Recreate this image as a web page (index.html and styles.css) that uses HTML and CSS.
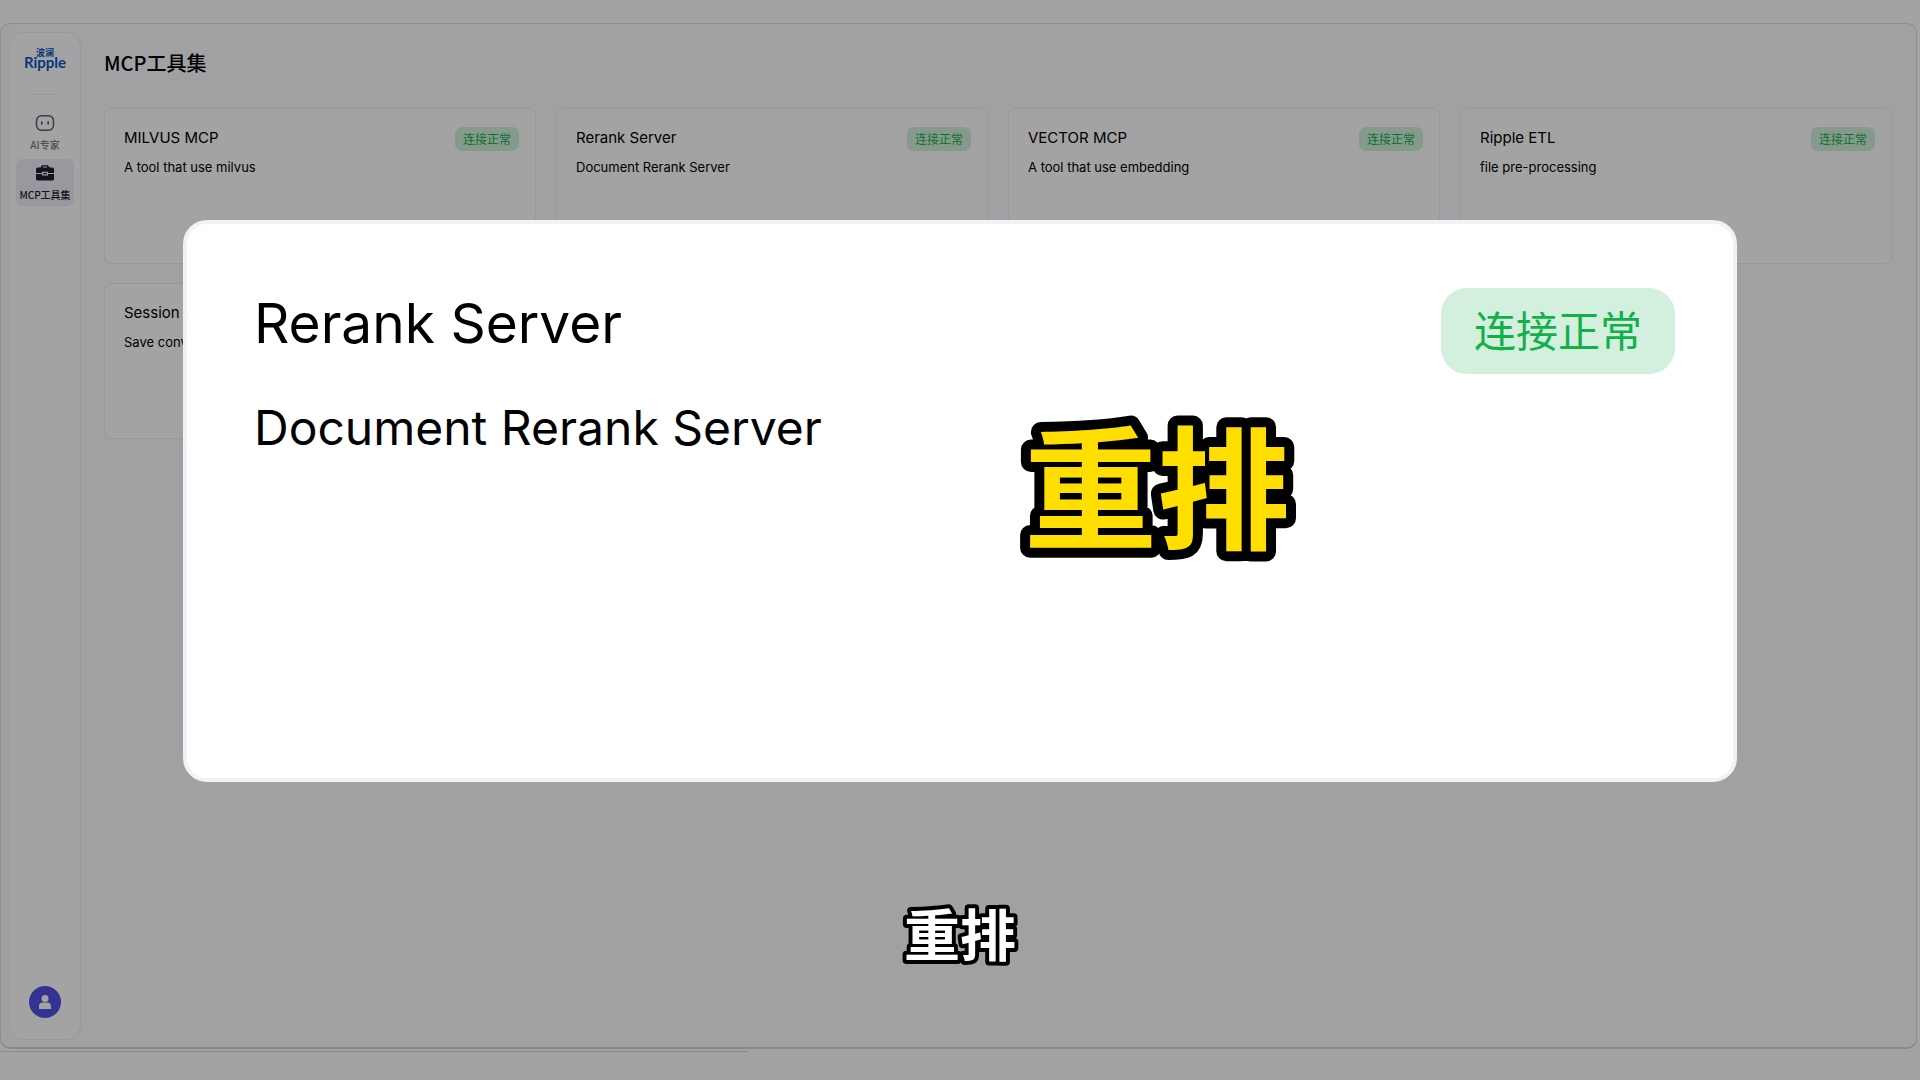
FILE: index.html
```html
<!DOCTYPE html>
<html lang="zh-CN">
<head>
<meta charset="utf-8">
<title>MCP工具集</title>
<link rel="stylesheet" href="styles.css">
</head>
<body>
<div class="app">
  <nav class="sidebar">
    <a class="logo" href="#" aria-label="波澜 Ripple">
      <span class="logo-cn">波澜</span>
      <span class="logo-en">Ripple</span>
    </a>
    <hr class="rule">
    <a class="nav-item" href="#">
      <svg class="nav-icon" viewBox="0 0 20 20" aria-hidden="true"><rect x="1.500" y="2.700" width="17" height="14.600" rx="5" fill="none" stroke="#5d5d72" stroke-width="1.500"/><path d="M6.800 9.200v1.600M13.200 9.200v1.600" stroke="#5d5d72" stroke-width="1.800" stroke-linecap="round"/></svg>
      <span>AI专家</span>
    </a>
    <a class="nav-item active" href="#">
      <svg class="nav-icon" viewBox="0 0 20 20" aria-hidden="true"><path fill="#1c1f32" fill-rule="evenodd" d="M5.500 4.500 7 2.200h6l1.500 2.300h2.700A1.800 1.800 0 0 1 19 6.300V10h-6V8.800H7V10H1V6.300a1.800 1.800 0 0 1 1.800-1.800zm2.200 0h4.600l-.5-.9H8.200zM1 11h6v1.500h6V11h6v5a1.600 1.600 0 0 1-1.600 1.600H2.600A1.600 1.600 0 0 1 1 16zM8.200 10h3.600v1.300H8.200z"/></svg>
      <span>MCP工具集</span>
    </a>
    <button class="avatar" type="button" aria-label="用户">
      <svg viewBox="0 0 32 32" aria-hidden="true"><circle cx="16" cy="12.500" r="3.500" fill="#fff"/><path d="M10 23v-2.500a4 4 0 0 1 4-4h4a4 4 0 0 1 4 4V23z" fill="#fff"/></svg>
    </button>
  </nav>
  <main class="content">
    <h1 class="page-title">MCP工具集</h1>
    <div class="cards">
      <article class="card"><div><h2>MILVUS MCP</h2><p>A tool that use milvus</p></div><span class="badge">连接正常</span></article>
      <article class="card"><div><h2>Rerank Server</h2><p>Document Rerank Server</p></div><span class="badge">连接正常</span></article>
      <article class="card"><div><h2>VECTOR MCP</h2><p>A tool that use embedding</p></div><span class="badge">连接正常</span></article>
      <article class="card"><div><h2>Ripple ETL</h2><p>file pre-processing</p></div><span class="badge">连接正常</span></article>
      <article class="card"><div><h2>Session</h2><p>Save conv</p></div></article>
    </div>
  </main>
  <aside class="watermark">
    <p class="watermark-title">激活 Windows</p>
    <p>转到“设置”以激活 Windows。</p>
  </aside>
</div>
<div class="status-line"></div>
<div class="overlay">
  <section class="dialog" role="dialog" aria-label="Rerank Server">
    <div>
      <h2>Rerank Server</h2>
      <p>Document Rerank Server</p>
    </div>
    <span class="badge badge-large">连接正常</span>
    <svg class="callout" viewBox="0 0 320 210"><text x="160" y="155">重排</text></svg>
  </section>
  <svg class="subtitle" viewBox="0 0 160 90"><text x="80" y="66">重排</text></svg>
</div>
</body>
</html>
```

FILE: styles.css
```css
* { box-sizing: border-box; }

body {
  margin: 0;
  min-height: 100vh;
  padding: 23px 3px 0 0;
  display: flex;
  flex-direction: column;
  background: #fff;
  color: #000;
  font-family: Inter, "Noto Sans CJK SC", sans-serif;
}

h1, h2, p { margin: 0; font-weight: 400; }
a { color: inherit; text-decoration: none; }

.app {
  position: relative;
  flex: 1;
  display: flex;
  gap: 23px;
  padding: 8px 24px 7px 8px;
  border: 1px solid #dedee2;
  border-bottom: 2px solid #d6d6d8;
  border-radius: 10px;
  background: #fcfcff;
}

.sidebar {
  width: 72px;
  display: flex;
  flex-direction: column;
  align-items: center;
  padding: 15px 5px 21px;
  border: 1px solid #eeeef2;
  border-radius: 14px;
  background: #fff;
}

.logo {
  display: flex;
  flex-direction: column;
  align-items: center;
  color: #0b57c4;
}
.logo-cn { font: 700 9px/9px "Noto Sans CJK SC", sans-serif; }
.logo-en { font: 700 15px/10px Lato, sans-serif; }

.rule {
  width: 24px;
  height: 1px;
  margin: 27px 0 14px;
  border: 0;
  background: #ececf0;
}

.nav-item {
  width: 58px;
  height: 47px;
  margin-bottom: 3px;
  display: flex;
  flex-direction: column;
  align-items: center;
  gap: 5px;
  padding-top: 4px;
  border-radius: 6px;
  color: #7b7b8c;
  font: 500 10px/14px "Noto Sans CJK SC", sans-serif;
}
.nav-item.active { background: #f0f0f6; color: #1c1f32; }
.nav-icon { width: 20px; height: 20px; }

.avatar {
  width: 32px;
  height: 32px;
  margin-top: auto;
  padding: 0;
  border: 0;
  border-radius: 50%;
  background: #5050e6;
}
.avatar svg { display: block; }

.content { flex: 1; padding-top: 16px; }

.page-title { font: 500 20px/30px "Noto Sans CJK SC", sans-serif; }

.cards {
  display: grid;
  grid-template-columns: repeat(4, 1fr);
  grid-auto-rows: 156px;
  gap: 19px 20px;
  margin-top: 30px;
}

.card {
  display: flex;
  justify-content: space-between;
  align-items: flex-start;
  padding: 18px 16px 18px 19px;
  border: 1px solid #eeeef2;
  border-radius: 7px;
  background: #fff;
}
.card h2 { font-size: 15px; line-height: 22px; }
.card p { margin-top: 8px; font-size: 13px; line-height: 20px; }

.badge {
  padding: 0 8px;
  border-radius: 7px;
  background: #d2f0dd;
  color: #13b04a;
  font: 400 12px/24px "Noto Sans CJK SC", sans-serif;
}

.watermark {
  position: absolute;
  right: 84px;
  bottom: 62px;
  color: #fffff6;
  font: 400 15px/22px "Open Sans", "Noto Sans CJK SC", sans-serif;
}
.watermark-title { font-size: 20px; line-height: 26px; }

.status-line {
  width: 39%;
  height: 1px;
  margin: 2px 0 28px;
  background: #d6d6d8;
}

.overlay {
  position: fixed;
  inset: 0;
  display: flex;
  flex-direction: column;
  align-items: center;
  padding: 220px 183px 0;
  background: rgba(0, 0, 0, 0.36);
}

.dialog {
  position: relative;
  width: 100%;
  min-height: 562px;
  display: flex;
  justify-content: space-between;
  align-items: flex-start;
  padding: 64px 58px 64px 67px;
  border: 4px solid #f1f1f6;
  border-radius: 24px;
  background: #fff;
}
.dialog h2 { font-size: 55px; line-height: 70px; }
.dialog p { margin-top: 38px; font-size: 48px; line-height: 64px; }

.badge-large {
  padding: 0 33px 4px;
  border-radius: 26px;
  font-size: 42px;
  line-height: 82px;
}

.callout, .subtitle {
  overflow: visible;
  font-family: "Noto Sans CJK SC", sans-serif;
  font-weight: 700;
  text-anchor: middle;
  paint-order: stroke;
  stroke: #000;
  stroke-linejoin: round;
}

.callout {
  position: absolute;
  left: 810px;
  top: 160px;
  width: 320px;
  height: 210px;
  fill: #ffde00;
  font-size: 133px;
  stroke-width: 20px;
}

.subtitle {
  width: 160px;
  height: 90px;
  margin-top: 108px;
  fill: #fff;
  font-size: 56px;
  stroke-width: 8px;
}
```
